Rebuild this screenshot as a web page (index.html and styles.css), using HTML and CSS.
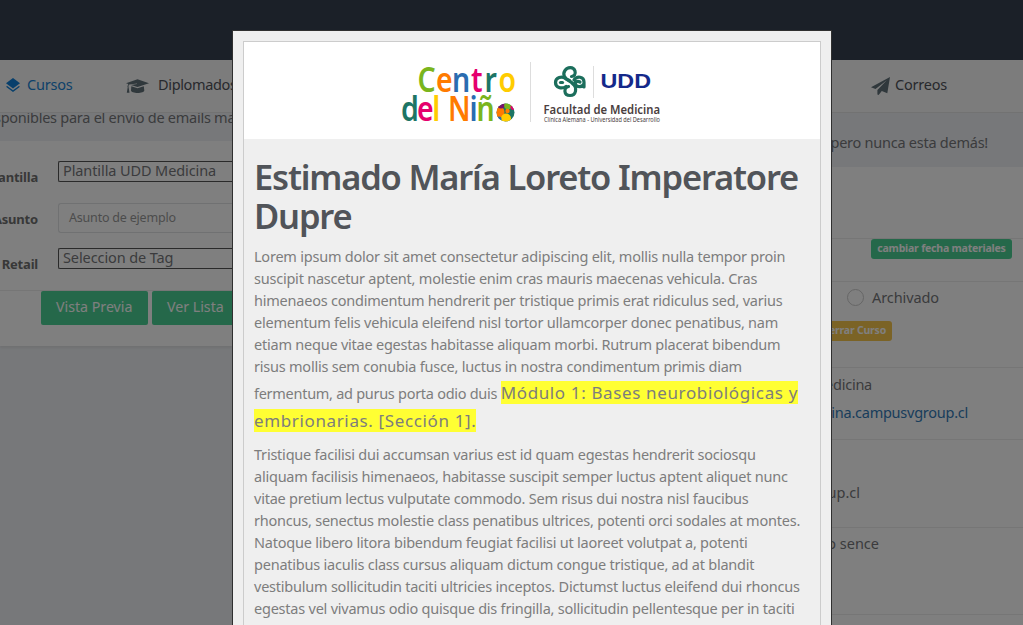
FILE: index.html
```html
<!DOCTYPE html>
<html lang="es">
<head>
<meta charset="utf-8">
<title>Vista previa de correo</title>
<link rel="stylesheet" href="styles.css">
</head>
<body>
<div class="page">
  <header class="topbar"></header>
  <nav class="tabs">
    <a class="tab tab-active"><svg class="ico-layers" viewBox="0 0 14 14"><path d="M7 0L14 5.2L7 10.4L0 5.2Z"/><path d="M1.2 7.9L0 8.8L7 14L14 8.8L12.8 7.9L7 12.2Z"/></svg><span>Cursos</span></a>
    <a class="tab tab-grad"><svg class="ico-cap" viewBox="0 0 23 15"><path d="M11.5 0.3L23 4.2L11.5 8L5 5.9L11 5V4.4L3.4 5.4C2.5 6 2.4 7 2.6 8.2L3.5 13.8H0.8L1.7 8.2C1.3 7.4 1.5 6.8 1.9 6.3L2.3 5L0 4.2Z"/><path d="M5.3 7.2L11.5 9.2L17.8 7.2L18.3 11.5C18.3 14.8 5 14.8 5 11.5Z"/></svg><span>Diplomados</span></a>
    <a class="tab tab-mail"><svg class="ico-plane" viewBox="0 0 19 18"><path d="M19 0L16.3 16.2L10.8 14.1L7.6 18L6.4 17.6V13.1L15.8 3.2L4.5 12L0 10.2Z"/></svg><span>Correos</span></a>
  </nav>
  <main class="columns">
    <section class="left">
      <p class="lead-left">sponibles para el envio de emails ma</p>
      <div class="card-left">
        <div class="field field-a"><label>Plantilla</label><div class="select">Plantilla UDD Medicina</div></div>
        <div class="field field-b"><label>Asunto</label><div class="input">Asunto de ejemplo</div></div>
        <div class="field field-c"><label>Retail</label><div class="select">Seleccion de Tag</div></div>
        <div class="actions"><span class="btn">Vista Previa</span><span class="btn">Ver Lista</span></div>
      </div>
    </section>
    <section class="right">
      <p class="lead-right"><span>pero nunca esta demás!</span></p>
      <div class="card-right">
        <div class="row row-1"></div>
        <div class="row row-2"><span class="badge badge-green">cambiar fecha materiales</span></div>
        <div class="row row-3">
          <div class="archive"><i class="radio"></i><span>Archivado</span></div>
          <span class="badge badge-amber">Cerrar Curso</span>
        </div>
        <div class="row row-4"><span class="t-med">edicina</span><a class="link">ina.campusvgroup.cl</a></div>
        <div class="row row-5"><span class="t-cl">up.cl</span></div>
        <div class="row row-6"><span class="t-sence">o sence</span></div>
      </div>
    </section>
  </main>
</div>
<div class="backdrop">
  <div class="modal">
    <article class="mail">
      <div class="brand">
        <svg class="logos" viewBox="395 55 270 75">
          <g class="kids" transform="scale(1 1.17)">
            <text y="78.6"><tspan class="c-lime" x="417.5">C</tspan><tspan class="c-orange" x="436">e</tspan><tspan class="c-blue" x="452">n</tspan><tspan class="c-pink" x="471">t</tspan><tspan class="c-teal" x="484.5">r</tspan><tspan class="c-yellow" x="498.5">o</tspan></text>
            <text y="103.8"><tspan class="c-teal" x="401">d</tspan><tspan class="c-pink" x="417">e</tspan><tspan class="c-yellow" x="432.3">l</tspan><tspan class="c-orange" x="448">N</tspan><tspan class="c-blue" x="469.5">i</tspan><tspan class="c-lime" x="476.5">ñ</tspan></text>
          </g>
          <clipPath id="ball"><circle cx="505.5" cy="112.5" r="9"/></clipPath>
          <g clip-path="url(#ball)">
            <rect class="c-teal" x="496" y="103" width="19" height="19"/>
            <circle class="c-orange" cx="499" cy="112" r="5.5"/>
            <circle class="c-purple" cx="501" cy="104.500" r="4"/>
            <circle class="c-lime" cx="508" cy="105.500" r="3.800"/>
            <circle class="c-pink" cx="513.500" cy="107" r="3"/>
            <circle class="c-yellow" cx="506" cy="118.500" r="5"/>
            <circle class="c-blue" cx="499" cy="119" r="2.500"/>
            <circle class="c-orange" cx="507.500" cy="111" r="2.200"/>
          </g>
          <path class="rule" d="M530.5 62V122M593.500 66V98"/>
          <g class="clover">
            <path d="M569.5 80.500C564 78.500 562.500 74 565 70.500C567.500 66.500 573.500 66.500 575 71C576 74.500 574 76.500 571.500 76.500"/>
            <path d="M566 86.500C561.500 89.500 555.500 87.500 555.500 82.500C555.500 77.500 562 75.500 565.500 78.500C568 80.700 571 81 573 84"/>
            <path d="M574 80C577 75.500 584 76.500 584 82V87M584 83.500C583 87.500 577 87.500 575.500 84.500C574.500 82.500 577 80.500 580 82"/>
            <path d="M573.500 84C577 88 576.500 95.500 570 95.500C563.500 95.500 563.500 87.500 568.500 86.500"/>
            <path d="M560.500 82.500H562.500"/>
          </g>
          <text class="udd" x="600.500" y="88" textLength="50.500" lengthAdjust="spacingAndGlyphs">UDD</text>
          <text class="faculty" x="543.500" y="114" textLength="116.500" lengthAdjust="spacingAndGlyphs">Facultad de Medicina</text>
          <text class="clinic" x="544" y="121.700" textLength="116" lengthAdjust="spacingAndGlyphs">Clínica Alemana - Universidad del Desarrollo</text>
        </svg>
      </div>
      <div class="content">
        <h1>Estimado María Loreto Imperatore<br>Dupre</h1>
        <p>Lorem ipsum dolor sit amet consectetur adipiscing elit, mollis nulla tempor proin<br>suscipit nascetur aptent, molestie enim cras mauris maecenas vehicula. Cras<br>himenaeos condimentum hendrerit per tristique primis erat ridiculus sed, varius<br>elementum felis vehicula eleifend nisl tortor ullamcorper donec penatibus, nam<br>etiam neque vitae egestas habitasse aliquam morbi. Rutrum placerat bibendum<br>risus mollis sem conubia fusce, luctus in nostra condimentum primis diam</p>
        <p class="tall">fermentum, ad purus porta odio duis <mark>Módulo 1: Bases neurobiológicas y</mark><br><mark>embrionarias. [Sección 1].</mark></p>
        <p>Tristique facilisi dui accumsan varius est id quam egestas hendrerit sociosqu<br>aliquam facilisis himenaeos, habitasse suscipit semper luctus aptent aliquet nunc<br>vitae pretium lectus vulputate commodo. Sem risus dui nostra nisl faucibus<br>rhoncus, senectus molestie class penatibus ultrices, potenti orci sodales at montes.<br>Natoque libero litora bibendum feugiat facilisi ut laoreet volutpat a, potenti<br>penatibus iaculis class cursus aliquam dictum congue tristique, ad at blandit<br>vestibulum sollicitudin taciti ultricies inceptos. Dictumst luctus eleifend dui rhoncus<br>egestas vel vivamus odio quisque dis fringilla, sollicitudin pellentesque per in taciti</p>
      </div>
    </article>
  </div>
</div>
</body>
</html>
```
FILE: styles.css
```css
* { box-sizing: border-box; }
body { margin: 0; height: 625px; overflow: hidden; font: 14.5px/22px "Noto Sans", sans-serif; color: #76777a; background: #eef1f5; }
p, h1 { margin: 0; }
.page { height: 625px; overflow: hidden; white-space: nowrap; }
.topbar { height: 60px; background: #364150; }
.tabs { height: 53px; display: flex; background: #f8f8f8; border-bottom: 1px solid #e4e4e4; color: #50535a; padding-left: 6px; }
.tab { display: flex; height: 48px; align-items: center; letter-spacing: -.2px; }
.tab svg { fill: #607078; }
.tab-active { width: 120px; color: #1b84d4; }
.tab-active svg { fill: #0f7fd8; }
.ico-layers { width: 14px; height: 14px; margin: 1px 7px 0 0; }
.tab-grad { width: 745px; letter-spacing: -.35px; }
.ico-cap { width: 23px; height: 15px; margin: 4px 9px 0 0; }
.ico-plane { width: 19px; height: 18px; margin: 4px 5px 0 0; }
.columns { display: flex; justify-content: space-between; }
.left { width: 232px; overflow: hidden; }
.lead-left { height: 28px; line-height: 8px; margin-left: -6px; overflow: hidden; letter-spacing: -.26px; }
.card-left { height: 205px; background: #fff; box-shadow: 0 2px 2px #dfe1e4; }
.field { display: flex; }
.field label { width: 38px; margin-right: 20px; display: flex; justify-content: flex-end; font-size: 13px; font-weight: 700; color: #707070; letter-spacing: -.2px; padding-top: 5px; }
.field-a { padding-top: 20px; height: 62px; }
.field-b { height: 45px; }
.field-c { height: 43px; border-bottom: 1px solid #ececec; }
.select { flex: 1; height: 21px; border: 1px solid #555; border-right: 0; border-radius: 2px 0 0 2px; padding-left: 4px; line-height: 17px; letter-spacing: -.1px; }
.input { flex: 1; height: 30px; border: 1px solid #e1e3e5; border-right: 0; border-radius: 3px 0 0 3px; padding-left: 10px; line-height: 27px; font-size: 12.5px; letter-spacing: -.2px; color: #999; }
.actions { display: flex; gap: 4px; padding: 0 0 0 41px; }
.btn { height: 34px; flex: none; padding: 0 15px; width: 107px; border-radius: 2px; background: #4bd195; color: #fff; line-height: 31px; font-size: 14.2px; }
.right { width: 192px; overflow: hidden; }
.lead-right { height: 54px; padding-top: 18px; display: flex; width: 157px; justify-content: flex-end; letter-spacing: -.25px; }
.card-right { background: #fff; height: 460px; }
.row { border-bottom: 1px solid #ececec; display: flex; flex-direction: column; align-items: flex-end; }
.row-1 { height: 72px; }
.row-2 { height: 43px; padding-right: 11px; }
.row-3 { height: 86px; padding: 4px 131px 0 0; }
.row-4 { height: 72px; padding: 5px 55px 0 0; letter-spacing: -.25px; }
.row-5 { height: 88px; padding: 41px 163px 0 0; }
.row-6 { height: 87px; padding: 4px 144px 0 0; }
.archive { display: flex; align-items: center; gap: 8px; margin-right: -47px; letter-spacing: -.1px; }
.radio { width: 17px; height: 17px; border: 1px solid #ccc; border-radius: 50%; }
.badge { height: 20px; border-radius: 3px; padding: 0 6px; font-size: 10.5px; font-weight: 700; line-height: 18px; color: #fff; letter-spacing: -.2px; }
.badge-green { background: #4bd195; width: 141px; text-align: center; padding: 0; }
.badge-amber { background: #f7c64d; margin-top: 13px; }
.t-med { margin-right: 96px; }
.link { color: #337ab7; margin-top: 6px; }
.backdrop { position: absolute; inset: 0; background: rgba(0, 0, 0, .5); padding: 30px 0 0 232px; overflow: hidden; }
.modal { width: 600px; height: 640px; border: 1px solid #303030; padding: 10px; background: #efefef; }
.mail { border: 1px solid #ccc; height: 640px; }
.brand { height: 97px; background: #fff; padding: 13px 0 0 151px; }
.logos { display: block; width: 270px; height: 75px; }
.kids { font: 600 28.500px "Noto Sans", sans-serif; }
.c-lime { fill: #7ab51d; } .c-orange { fill: #ff7b00; } .c-blue { fill: #2a6cb0; }
.c-pink { fill: #e5006d; } .c-teal { fill: #1d7565; } .c-yellow { fill: #ffcc00; } .c-purple { fill: #76106d; }
.rule { stroke: #ddd; stroke-width: 1; fill: none; }
.clover { stroke: #1c6e5c; stroke-width: 3.2; fill: none; stroke-linecap: round; }
.udd { font: 700 21px "Liberation Sans", sans-serif; fill: #14298a; }
.faculty { font: 600 12px "Noto Sans", sans-serif; fill: #4a4040; }
.clinic { font: 400 6.200px "Noto Sans", sans-serif; fill: #4a4040; }
.content { padding: 18px 10px 0; white-space: nowrap; letter-spacing: -.225px; color: #7d7d7d; }
.content h1 { font-size: 34.5px; line-height: 39px; font-weight: 600; letter-spacing: -1.19px; color: #515459; margin-bottom: 10px; }
.content .tall { line-height: 28px; margin: 2px 0 8px; letter-spacing: -.28px; }
mark { background: #ffff33; color: inherit; font: 17px/22px "Noto Sans", sans-serif; letter-spacing: .63px; padding: 0; }
```
